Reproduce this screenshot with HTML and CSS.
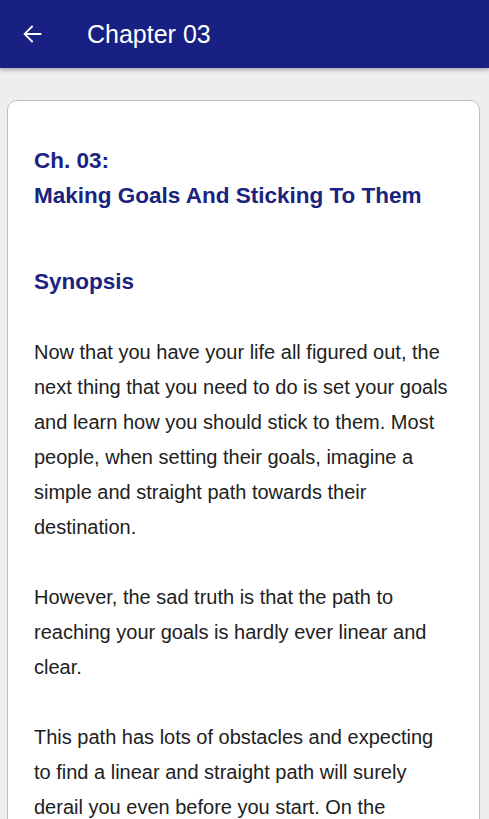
FILE: index.html
```html
<!DOCTYPE html>
<html>
<head>
<meta charset="utf-8">
<link rel="stylesheet" href="styles.css">
</head>
<body>
<header class="appbar">
  <button class="back" aria-label="Back">
    <svg width="28" height="28" viewBox="0 0 24 24"><path d="M20 11.2H7.6l5.5-5.5L12 4.6l-7.4 7.4 7.4 7.4 1.1-1.1-5.5-5.5H20v-1.6z" fill="#fff"/></svg>
  </button>
  <h1 class="title">Chapter 03</h1>
</header>
<main class="content">
  <article class="card">
    <h2 class="chapter">Ch. 03:<br>Making Goals And Sticking To Them</h2>
    <h3 class="section">Synopsis</h3>
    <p class="para">Now that you have your life all figured out, the next thing that you need to do is set your goals and learn how you should stick to them. Most people, when setting their goals, imagine a simple and straight path towards their destination.</p>
    <p class="para">However, the sad truth is that the path to reaching your goals is hardly ever linear and clear.</p>
    <p class="para">This path has lots of obstacles and expecting to find a linear and straight path will surely derail you even before you start. On the contrary, you should expect to face many challenges along the way.</p>
  </article>
</main>
</body>
</html>
```
FILE: styles.css
```css
html, body {
  margin: 0;
  padding: 0;
}
body {
  background: #eeeeee;
  font-family: "Liberation Sans", Arial, sans-serif;
  height: 819px;
  overflow: hidden;
}
.appbar {
  height: 68px;
  background: #182084;
  display: flex;
  align-items: center;
  box-shadow: 0 2px 4px rgba(0,0,0,0.3);
  position: relative;
  z-index: 1;
}
.back {
  background: none;
  border: 0;
  padding: 0;
  margin-left: 18px;
  width: 28px;
  height: 28px;
  display: flex;
}
.title {
  margin: 0 0 0 41px;
  color: #fff;
  font-weight: normal;
  font-size: 25px;
}
.content {
  padding: 32px 9px 0 7px;
}
.card {
  background: #fff;
  border: 1px solid #bdbdbd;
  border-radius: 10px;
  padding: 42px 26px 0 26px;
  min-height: 800px;
}
.chapter {
  margin: 0;
  color: #1a237e;
  font-size: 22.5px;
  line-height: 35px;
  font-weight: bold;
}
.section {
  margin: 51px 0 0 0;
  color: #1a237e;
  font-size: 22.5px;
  line-height: 35px;
  font-weight: bold;
}
.para {
  margin: 35px 0 0 0;
  color: #212121;
  font-size: 20px;
  line-height: 35px;
}
.section + .para {
  margin-top: 36px;
}
```
